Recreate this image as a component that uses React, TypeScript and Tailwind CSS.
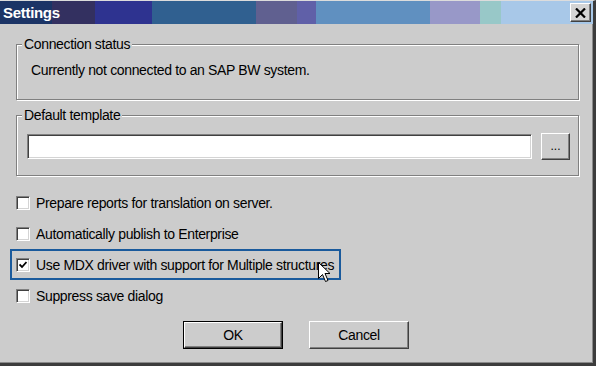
import React from "react";

const font = { fontFamily: '"Liberation Sans", Arial, sans-serif' };

function Checkbox({ checked }: { checked?: boolean }) {
  return (
    <div className="w-[14px] h-[14px] shrink-0 bg-white border border-t-[#808080] border-l-[#808080] border-b-white border-r-white shadow-[inset_1px_1px_0_#404040,inset_-1px_-1px_0_#d4d4d4] flex items-center justify-center">
      {checked && (
        <svg width="8" height="8" viewBox="0 0 8 8">
          <path d="M0.5 3.5 L3 6 L7.5 1" fill="none" stroke="#000" strokeWidth="1.8" />
        </svg>
      )}
    </div>
  );
}

function Row({ checked, label }: { checked?: boolean; label: string }) {
  return (
    <div className="h-[31px] flex items-center gap-[6px]">
      <Checkbox checked={checked} />
      <span className="text-[14px] tracking-[-0.35px] text-black leading-[16px]">{label}</span>
    </div>
  );
}

function Button({ label, def }: { label: string; def?: boolean }) {
  return (
    <div
      className={
        "w-[100px] h-[28px] " +
        (def ? "border border-black" : "")
      }
    >
      <div className="w-full h-full bg-[#cccccc] border border-t-white border-l-white border-b-[#404040] border-r-[#404040] shadow-[inset_-1px_-1px_0_#808080] flex items-center justify-center text-[14px] tracking-[-0.35px] text-black">
        {label}
      </div>
    </div>
  );
}

export default function App() {
  const bands: [number, string][] = [
    [52, "#1b3466"],
    [43, "#333060"],
    [57, "#2e3390"],
    [104, "#306090"],
    [41, "#606090"],
    [19, "#6060a8"],
    [114, "#6090c0"],
    [50, "#9898c8"],
    [21, "#98c8c8"],
    [92, "#a8c8e8"],
  ];
  return (
    <div
      className="relative w-[596px] h-[366px] bg-[#cccccc] flex flex-col border-t border-t-[#dcdcdc] border-r-[3px] border-b-[3px] border-r-[#3c3c3c] border-b-[#3c3c3c] shadow-[inset_-1px_-1px_0_#8a8a8a] overflow-hidden"
      style={font}
    >
      {/* Title bar */}
      <div className="relative h-[23px] flex shrink-0">
        {bands.map(([w, c], i) => (
          <div key={i} className="h-full" style={{ width: w, backgroundColor: c }} />
        ))}
        <div className="absolute inset-0 flex items-center justify-between pl-[3px] pr-[2px]">
          <span className="text-white font-bold text-[15px] tracking-[-0.3px] leading-none">Settings</span>
          <div className="w-[21px] h-[19px] bg-[#d4d4d4] border border-t-white border-l-white border-b-[#404040] border-r-[#404040] shadow-[inset_-1px_-1px_0_#808080] flex items-center justify-center">
            <svg width="11" height="10" viewBox="0 0 11 10">
              <path d="M1 0.5 L10 9.5 M10 0.5 L1 9.5" stroke="#000" strokeWidth="2.2" />
            </svg>
          </div>
        </div>
      </div>

      {/* Content */}
      <div className="flex flex-col pl-[16px] pr-[14px]">
        {/* Group 1 */}
        <div className="relative mt-[20px] h-[56px] border border-[#808080] shadow-[inset_1px_1px_0_#fff,1px_1px_0_#fff] pt-[17px] pl-[14px]">
          <span className="absolute -top-[9px] left-[5px] px-[2px] bg-[#cccccc] text-[14px] tracking-[-0.35px] leading-[16px] text-black">
            Connection status
          </span>
          <span className="block text-[14px] tracking-[-0.35px] leading-[16px] text-black">
            Currently not connected to an SAP BW system.
          </span>
        </div>

        {/* Group 2 */}
        <div className="relative mt-[15px] h-[61px] border border-[#808080] shadow-[inset_1px_1px_0_#fff,1px_1px_0_#fff] pt-[17px] pl-[10px] flex items-start">
          <span className="absolute -top-[9px] left-[5px] px-[2px] bg-[#cccccc] text-[14px] tracking-[-0.35px] leading-[16px] text-black">
            Default template
          </span>
          <div className="mt-[1px] w-[505px] h-[25px] bg-white border border-t-[#808080] border-l-[#808080] border-b-white border-r-white shadow-[inset_1px_1px_0_#404040,inset_-1px_-1px_0_#d4d4d4]" />
          <div className="ml-[9px] w-[29px] h-[27px] bg-[#cccccc] border border-t-white border-l-white border-b-[#404040] border-r-[#404040] shadow-[inset_-1px_-1px_0_#808080] flex items-center justify-center text-[12px] text-black leading-none pb-[2px]">
            ...
          </div>
        </div>

        {/* Checkboxes */}
        <div className="mt-[11px] flex flex-col">
          <Row label="Prepare reports for translation on server." />
          <Row label="Automatically publish to Enterprise" />
          <div className="-ml-[6px] w-[331px] h-[31px] border-2 border-[#1a5a9c] pl-[4px] flex items-center gap-[6px]">
            <Checkbox checked />
            <span className="text-[14px] tracking-[-0.35px] text-black leading-[16px] whitespace-nowrap">
              Use MDX driver with support for Multiple structures
            </span>
          </div>
          <Row label="Suppress save dialog" />
        </div>
      </div>

      {/* Buttons */}
      <div className="mt-[10px] flex pl-[183px] gap-[26px]">
        <Button label="OK" def />
        <Button label="Cancel" />
      </div>

      {/* Mouse cursor */}
      <svg
        className="absolute left-[318px] top-[261px]"
        width="13"
        height="21"
        viewBox="0 0 13 21"
      >
        <path
          d="M0.5 0.5 L0.5 16.5 L4.5 12.5 L7.5 19.5 L10 18.5 L7 11.5 L12 11.5 Z"
          fill="#fff"
          stroke="#000"
          strokeWidth="1"
        />
      </svg>
    </div>
  );
}
